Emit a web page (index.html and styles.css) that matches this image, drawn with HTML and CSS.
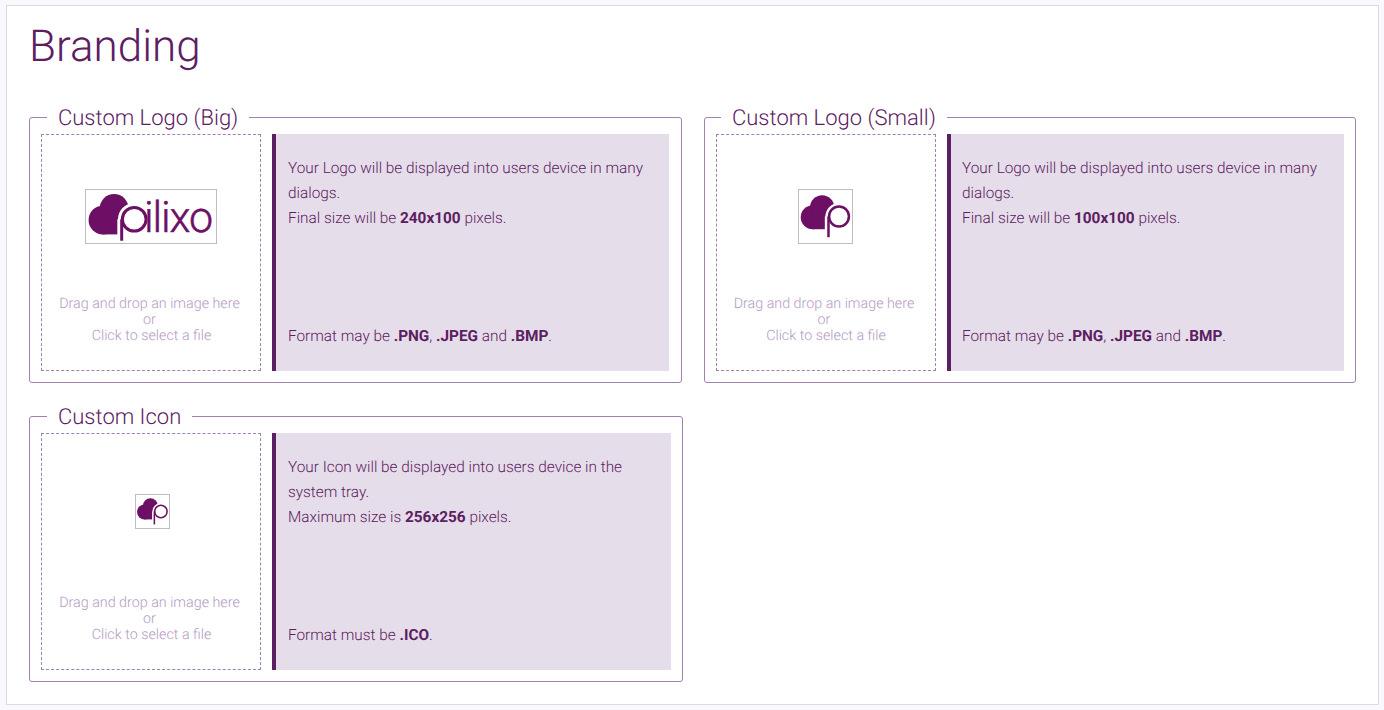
FILE: index.html
```html
<!DOCTYPE html>
<html lang="en">
<head>
<meta charset="utf-8">
<title>Branding</title>
<link rel="stylesheet" href="styles.css">
</head>
<body>
<svg class="defs" width="0" height="0" aria-hidden="true">
  <defs>
    <g id="cloud">
      <circle class="cloud" cx="14.300" cy="28.200" r="12.500"/>
      <circle class="cloud" cx="24" cy="18" r="12.500"/>
      <path class="cloud" d="M14 40.700H30V20H14Z"/>
    </g>
    <g id="mark">
      <use href="#cloud"/>
      <path class="halo" d="M30.600 27.500V53"/>
      <circle class="halo" cx="41.500" cy="27.500" r="10.300"/>
      <circle class="p" cx="41.500" cy="27.500" r="10.300"/>
      <path class="p" d="M30.600 27.500V49"/>
    </g>
    <g id="mark-wide">
      <use href="#cloud"/>
      <path class="halo" d="M30.600 27.500V53"/>
      <circle class="halo" cx="41.500" cy="27.500" r="10.300"/>
      <circle class="p" cx="41.500" cy="27.500" r="10.300"/>
      <path class="p" d="M30.600 27.500V46.200"/>
    </g>
  </defs>
</svg>
<main class="card">
  <h1 class="title">Branding</h1>
  <div class="grid">
    <fieldset class="panel panel-first">
      <legend class="legend">Custom Logo (Big)</legend>
      <div class="row">
        <div class="drop">
          <div class="preview">
            <svg class="img img-big" viewBox="0 0 130 53">
              <use href="#mark-wide" transform="translate(0.500 -2.400) scale(1.150)"/>
              <text class="word" x="58" y="41.500" textLength="69">ilixo</text>
            </svg>
          </div>
          <p class="hint">Drag and drop an image here<br>or<br><span class="hint-last">Click to select a file</span></p>
        </div>
        <div class="info">
          <p>Your Logo will be displayed into users device in many dialogs.<br>Final size will be <b>240x100</b> pixels.</p>
          <p>Format may be <b>.PNG</b>, <b>.JPEG</b> and <b>.BMP</b>.</p>
        </div>
      </div>
    </fieldset>
    <fieldset class="panel panel-second">
      <legend class="legend">Custom Logo (Small)</legend>
      <div class="row">
        <div class="drop">
          <div class="preview">
            <svg class="img img-small" viewBox="0 0 55 55"><use href="#mark"/></svg>
          </div>
          <p class="hint">Drag and drop an image here<br>or<br><span class="hint-last">Click to select a file</span></p>
        </div>
        <div class="info">
          <p>Your Logo will be displayed into users device in many dialogs.<br>Final size will be <b>100x100</b> pixels.</p>
          <p>Format may be <b>.PNG</b>, <b>.JPEG</b> and <b>.BMP</b>.</p>
        </div>
      </div>
    </fieldset>
    <fieldset class="panel panel-wide">
      <legend class="legend">Custom Icon</legend>
      <div class="row">
        <div class="drop">
          <div class="preview">
            <svg class="img img-icon" viewBox="0 0 55 55"><use href="#mark"/></svg>
          </div>
          <p class="hint">Drag and drop an image here<br>or<br><span class="hint-last">Click to select a file</span></p>
        </div>
        <div class="info">
          <p>Your Icon will be displayed into users device in the system tray.<br>Maximum size is <b>256x256</b> pixels.</p>
          <p>Format must be <b>.ICO</b>.</p>
        </div>
      </div>
    </fieldset>
  </div>
</main>
</body>
</html>
```
FILE: styles.css
```css
* { box-sizing: border-box; }
html, body { height: 100%; }
body {
  margin: 0;
  padding: 5px 5px 5px 6px;
  background: #f8f8fd;
  font-family: Roboto, "Liberation Sans", sans-serif;
  font-weight: 300;
  color: #5c2062;
  overflow: hidden;
  text-rendering: geometricPrecision;
}
.defs { position: absolute; }
.card {
  height: 700px;
  background: #fff;
  border: 1px solid #dcdbe2;
  padding: 0 22px 0 22px;
}
.title {
  margin: 15px 0 0;
  font-size: 44px;
  line-height: 50px;
  font-weight: 300;
  height: 50px;
}
.grid {
  display: grid;
  grid-template-columns: 653px 652.500px;
  column-gap: 21.500px;
  row-gap: 18px;
  margin-top: 31px;
}
.panel {
  margin: 0;
  min-width: 0;
  height: 281px;
  border: 1px solid #a17fae;
  border-radius: 3px;
  padding: 2px 11px 11px;
}
.panel-first { padding-right: 12px; }
.panel-wide { width: 654px; }
.panel-second .legend { margin-left: 5.500px; }
.panel-second .info { padding-left: 11.500px; }
.legend {
  margin-left: 6px;
  padding: 4px 11px 0;
  font-size: 22px;
  line-height: 26px;
}
.row {
  display: flex;
  height: 237px;
  gap: 11px;
}
.drop {
  flex: 0 0 220px;
  display: flex;
  flex-direction: column;
  border: 1px dashed #a17fae;
  padding-bottom: 26px;
}
.preview {
  flex: 1;
  display: flex;
  justify-content: center;
  padding-top: 54px;
}
.img {
  display: block;
  border: 1px solid #bdbdbd;
  background: #fff;
}
.img-big { width: 132px; height: 55px; }
.img-small { width: 55px; height: 55px; }
.img-icon { width: 35px; height: 35px; margin: 6px 0 0 2px; }
.cloud { fill: #6d0f65; }
.halo { fill: #fff; stroke: #fff; stroke-width: 7.600; }
.p { fill: none; stroke: #6d0f65; stroke-width: 2.600; }
.word {
  font-family: Roboto, sans-serif;
  font-weight: 300;
  font-size: 43px;
  fill: #6d0f65;
  stroke: #6d0f65;
  stroke-width: 0.500px;
}
.hint {
  margin: 0;
  padding-right: 3px;
  font-size: 14.300px;
  line-height: 16px;
  text-align: center;
  color: #b49ac2;
}
.hint-last { display: inline-block; margin-left: 4px; }
.info {
  flex: 1;
  display: flex;
  flex-direction: column;
  justify-content: space-between;
  background: #e5dde9;
  border-left: 4px solid #5c2062;
  padding: 22px 12px 22px 12px;
  font-size: 15.350px;
  line-height: 25px;
}
.info p { margin: 0; }
.info b { font-weight: 700; }
```
